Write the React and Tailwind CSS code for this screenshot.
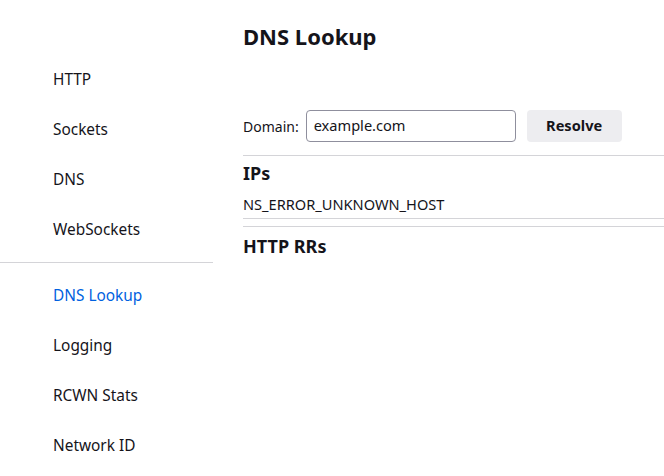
import React from 'react';

const topItems = ['HTTP', 'Sockets', 'DNS', 'WebSockets'];
const bottomItems = ['DNS Lookup', 'Logging', 'RCWN Stats', 'Network ID'];

function NavItem({ label, selected }) {
  return (
    <div
      className={`h-[50px] flex items-center pl-[53px] text-[15.4px] ${
        selected ? 'text-[#0061e0]' : 'text-[#15141a]'
      }`}
    >
      {label}
    </div>
  );
}

export default function App() {
  return (
    <div
      className="h-[476px] w-full flex bg-white text-[#15141a] overflow-hidden"
      style={{ fontFamily: '"Noto Sans", "Open Sans", sans-serif' }}
    >
      {/* sidebar */}
      <nav className="w-[213px] shrink-0 pt-[55px] flex flex-col">
        {topItems.map((item) => (
          <NavItem key={item} label={item} />
        ))}
        <div className="mt-[7px] mb-[8px] border-t border-[#d4d4d8]" />
        {bottomItems.map((item) => (
          <NavItem key={item} label={item} selected={item === 'DNS Lookup'} />
        ))}
      </nav>

      {/* main */}
      <main className="flex-1 pl-[30px] flex flex-col">
        <h1 className="mt-[22px] text-[22px] leading-[28px] font-bold">DNS Lookup</h1>

        <div className="mt-[60px] flex items-center h-[32px]">
          <label className="text-[14px] mr-[7px]">Domain:</label>
          <div className="w-[210px] h-[32px] border border-[#8f8f9d] rounded-[4px] flex items-center pl-[7px] text-[14.6px]">
            example.com
          </div>
          <button className="ml-[11px] w-[95px] h-[32px] rounded-[4px] bg-[#ededf0] text-[14.6px] font-bold">
            Resolve
          </button>
        </div>

        <div className="mt-[13px] border-t border-[#d4d4d8]" />
        <h2 className="h-[35px] flex items-center text-[18px] font-bold">IPs</h2>
        <div className="h-[27px] flex items-center text-[14.6px]">NS_ERROR_UNKNOWN_HOST</div>
        <div className="border-t border-[#d4d4d8]" />
        <div className="mt-[7px] border-t border-[#d4d4d8]" />
        <h2 className="h-[38px] flex items-center text-[18px] font-bold">HTTP RRs</h2>
      </main>
    </div>
  );
}
